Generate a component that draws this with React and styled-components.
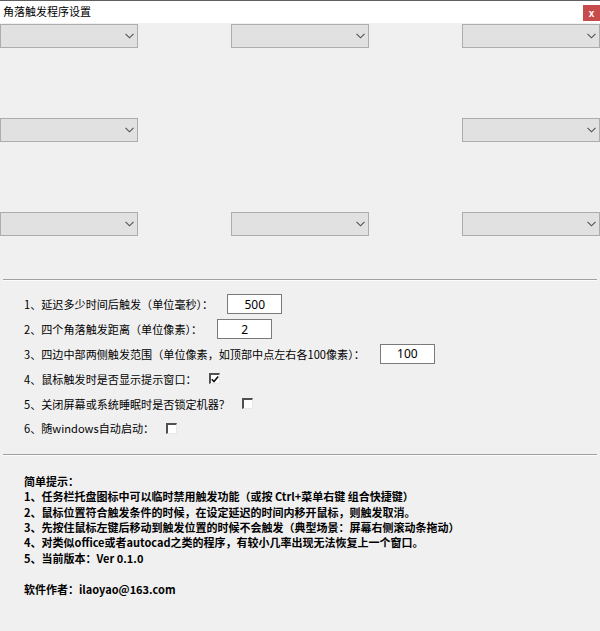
import React from "react";
import styled, { createGlobalStyle } from "styled-components";

const Global = createGlobalStyle`
  html, body { margin: 0; padding: 0; background: #f0f0f0; }
  body { font-family: "Noto Sans", "Noto Sans CJK SC", sans-serif; }
`;

const Window = styled.div`
  width: 600px;
  height: 631px;
  background: #f0f0f0;
  border-top: 1px solid #5f5f5f;
  box-sizing: border-box;
  overflow: hidden;
  color: #000;
  font-size: 11.5px;
`;

const TitleBar = styled.div`
  height: 22px;
  background: #fff;
  display: flex;
  align-items: center;
  justify-content: space-between;
  padding-left: 3px;
`;

const Title = styled.span`
  font-family: "Noto Sans CJK SC", sans-serif;
  font-size: 11px;
  line-height: 1;
  margin-top: -1px;
`;

const CloseBtn = styled.div`
  width: 17px;
  height: 16px;
  margin-top: 2px;
  background: #c74b4b;
  color: #fff;
  font-family: "Liberation Sans", sans-serif;
  font-size: 10px;
  font-weight: bold;
  display: flex;
  align-items: center;
  justify-content: center;
`;

const ComboGrid = styled.div`
  margin-top: 1px;
  display: grid;
  grid-template-columns: repeat(3, 138px);
  justify-content: space-between;
  row-gap: 70px;
`;

const Combo = styled.div`
  height: 24px;
  box-sizing: border-box;
  background: #e1e1e1;
  border: 1px solid #adadad;
  display: flex;
  align-items: center;
  justify-content: flex-end;
  padding-right: 3px;
  visibility: ${(p) => (p.$hidden ? "hidden" : "visible")};
`;

const Separator = styled.div`
  margin: ${(p) => p.$m};
  height: 1px;
  background: #a0a0a0;
  border-bottom: 1px solid #fcfcfc;
`;

const Settings = styled.div`
  padding: 11px 0 0 24px;
  display: flex;
  flex-direction: column;
`;

const Row = styled.div`
  height: 24.8px;
  display: flex;
  align-items: center;
  font-family: "Noto Sans CJK SC", sans-serif;
  font-size: 11.1px;
  white-space: nowrap;
`;

const NumInput = styled.div`
  margin-left: ${(p) => p.$ml}px;
  width: 55px;
  height: 20px;
  box-sizing: border-box;
  background: #fff;
  border: 1px solid #7a7a7a;
  display: flex;
  align-items: center;
  justify-content: center;
  font-family: "Noto Sans", sans-serif;
  font-size: 12px;
`;

const Check = styled.div`
  margin-left: ${(p) => p.$ml}px;
  width: 11px;
  height: 11px;
  box-sizing: border-box;
  background: #fff;
  border-top: 2px solid #505050;
  border-left: 2px solid #505050;
  border-right: 1px solid #e8e8e8;
  border-bottom: 1px solid #e8e8e8;
  display: flex;
  align-items: center;
  justify-content: center;
`;

const Hints = styled.div`
  padding: 18px 0 0 24px;
  font-family: "Noto Sans CJK SC", sans-serif;
  font-weight: bold;
  font-size: 11px;
  line-height: 15.4px;
  white-space: nowrap;
`;

const Gap = styled.div`
  height: ${(p) => p.$h}px;
`;

const Chevron = () => (
  <svg width="9" height="6" viewBox="0 0 9 6">
    <path d="M0.5 0.8 L4.5 4.8 L8.5 0.8" fill="none" stroke="#505050" strokeWidth="1.1" />
  </svg>
);

const Tick = () => (
  <svg width="8" height="7" viewBox="0 0 8 7">
    <path d="M0.8 3.2 L3 5.6 L7.2 0.6" fill="none" stroke="#111" strokeWidth="1.6" />
  </svg>
);

const comboCells = [1, 1, 1, 1, 0, 1, 1, 1, 1];

export default function App() {
  return (
    <>
      <Global />
      <Window>
        <TitleBar>
          <Title>角落触发程序设置</Title>
          <CloseBtn>x</CloseBtn>
        </TitleBar>
        <ComboGrid>
          {comboCells.map((v, i) => (
            <Combo key={i} $hidden={!v}>
              <Chevron />
            </Combo>
          ))}
        </ComboGrid>
        <Separator $m="43px 3px 0 3px" />
        <Settings>
          <Row>
            1、延迟多少时间后触发（单位毫秒）：<NumInput $ml={14}>500</NumInput>
          </Row>
          <Row>
            2、四个角落触发距离（单位像素）：<NumInput $ml={15}>2</NumInput>
          </Row>
          <Row>
            3、四边中部两侧触发范围（单位像素，如顶部中点左右各100像素）：<NumInput $ml={15}>100</NumInput>
          </Row>
          <Row>
            4、鼠标触发时是否显示提示窗口：<Check $ml={12}><Tick /></Check>
          </Row>
          <Row>
            5、关闭屏幕或系统睡眠时是否锁定机器？<Check $ml={12} />
          </Row>
          <Row>
            6、随windows自动启动：<Check $ml={12} />
          </Row>
        </Settings>
        <Separator $m="13px 3px 0 3px" />
        <Hints>
          <div>简单提示：</div>
          <div>1、任务栏托盘图标中可以临时禁用触发功能（或按 Ctrl+菜单右键 组合快捷键）</div>
          <div>2、鼠标位置符合触发条件的时候，在设定延迟的时间内移开鼠标，则触发取消。</div>
          <div>3、先按住鼠标左键后移动到触发位置的时候不会触发（典型场景：屏幕右侧滚动条拖动）</div>
          <div>4、对类似office或者autocad之类的程序，有较小几率出现无法恢复上一个窗口。</div>
          <div>5、当前版本：Ver 0.1.0</div>
          <Gap $h={16} />
          <div>软件作者：ilaoyao@163.com</div>
        </Hints>
      </Window>
    </>
  );
}
